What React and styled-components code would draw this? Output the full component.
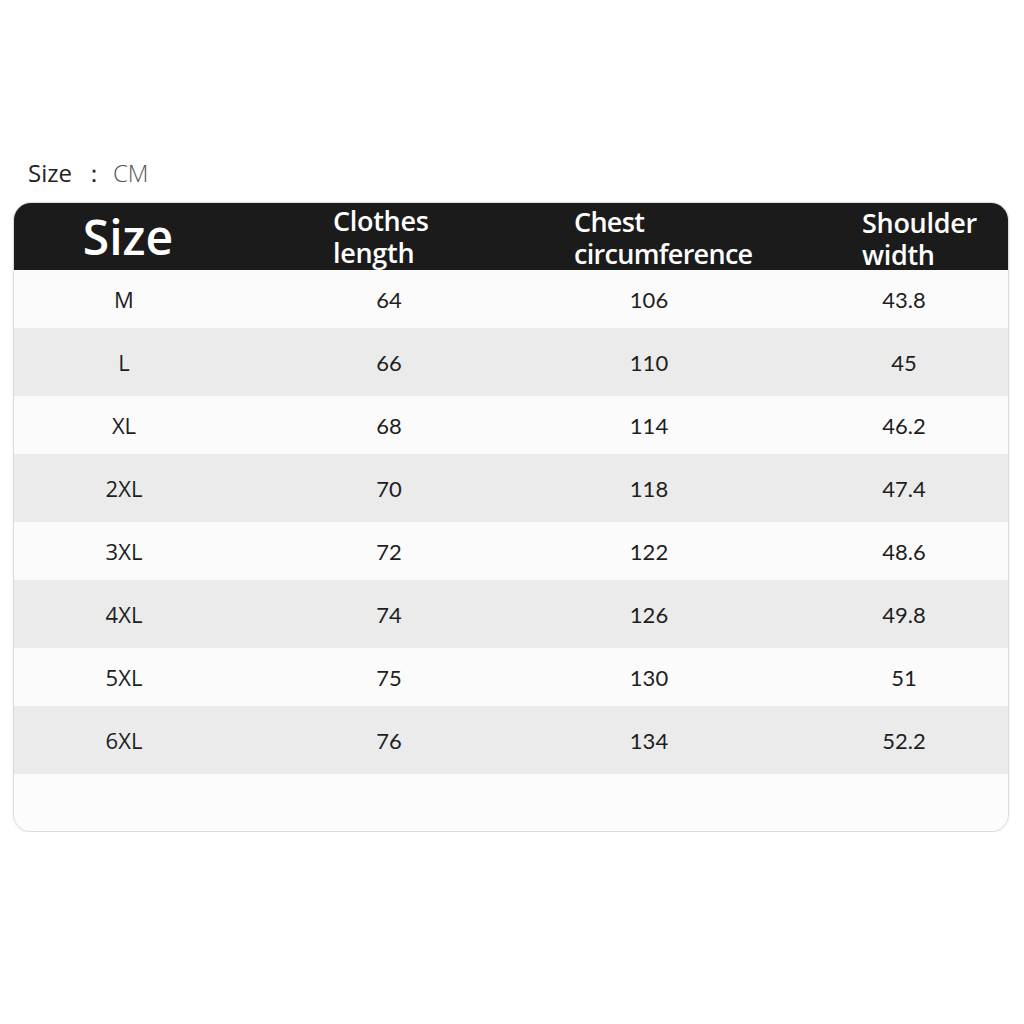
import React from 'react';
import styled, { createGlobalStyle } from 'styled-components';

const GlobalStyle = createGlobalStyle`
    html, body {
        margin: 0;
        padding: 0;
        background: #ffffff;
    }
`;

const rows = [
    ['M', '64', '106', '43.8'],
    ['L', '66', '110', '45'],
    ['XL', '68', '114', '46.2'],
    ['2XL', '70', '118', '47.4'],
    ['3XL', '72', '122', '48.6'],
    ['4XL', '74', '126', '49.8'],
    ['5XL', '75', '130', '51'],
    ['6XL', '76', '134', '52.2']
];

const Page = styled.div`
    padding: 158px 15px 0 13px;
    font-family: "Open Sans", "Noto Sans", sans-serif;
`;

const Caption = styled.div`
    margin-left: 15px;
    height: 30px;
    line-height: 30px;
    font-size: 24px;
    color: #222;
    margin-bottom: 14px;
`;

const Colon = styled.span`
    margin: 0 7px 0 10px;
`;

const Unit = styled.span`
    color: #555;
    font-weight: 300;
`;

const Table = styled.div`
    width: 994px;
    border: 1px solid #dcdcdc;
    border-radius: 18px;
    overflow: hidden;
    box-shadow: 0 1px 3px rgba(0, 0, 0, 0.08);
    background: #fbfbfb;
`;

const Grid = styled.div`
    display: grid;
    grid-template-columns: 220px 310px 210px 1fr;
    align-items: center;
`;

const Header = styled(Grid)`
    height: 67px;
    background: #1b1b1b;
    color: #ffffff;
`;

const BigHead = styled.div`
    font-size: 48px;
    font-weight: 600;
    text-align: center;
    padding-left: 8px;
    line-height: 1;
`;

const HeadCell = styled.div`
    font-size: 27px;
    font-weight: 600;
    letter-spacing: ${props => props.tight ? -0.7 : -0.3}px;
    padding-left: ${props => props.indent}px;
    padding-top: ${props => props.drop || 0}px;
`;

const HeadLine = styled.div`
    line-height: 32px;
    height: 32px;
    white-space: nowrap;
`;

const Row = styled(Grid)`
    height: ${props => props.shade ? 68 : 58}px;
    background: ${props => props.shade ? '#ebebeb' : '#fbfbfb'};
`;

const Cell = styled.div`
    text-align: center;
    font-size: 22px;
    color: #1e1e1e;
    font-family: ${props => props.label ? '"Open Sans", sans-serif' : 'Lato, "Open Sans", sans-serif'};
    padding-left: ${props => props.shift || 0}px;
`;

const Filler = styled.div`
    height: 57px;
    background: #fcfcfc;
`;

const App = () => {
    return (
        <Page>
            <GlobalStyle />
            <Caption>Size<Colon>：</Colon><Unit>CM</Unit></Caption>
            <Table>
                <Header>
                    <BigHead>Size</BigHead>
                    <HeadCell indent={99}>
                        <HeadLine>Clothes</HeadLine>
                        <HeadLine>length</HeadLine>
                    </HeadCell>
                    <HeadCell indent={30} drop={2} tight>
                        <HeadLine>Chest</HeadLine>
                        <HeadLine>circumference</HeadLine>
                    </HeadCell>
                    <HeadCell indent={108} drop={4}>
                        <HeadLine>Shoulder</HeadLine>
                        <HeadLine>width</HeadLine>
                    </HeadCell>
                </Header>
                {rows.map((r, i) => (
                    <Row key={r[0]} shade={i % 2 === 1}>
                        <Cell label>{r[0]}</Cell>
                        <Cell>{r[1]}</Cell>
                        <Cell>{r[2]}</Cell>
                        <Cell shift={46}>{r[3]}</Cell>
                    </Row>
                ))}
                <Filler />
            </Table>
        </Page>
    );
};

export default App;
